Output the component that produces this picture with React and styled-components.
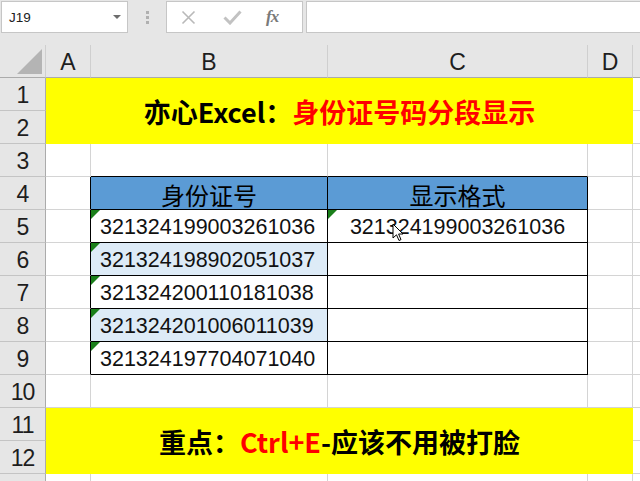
import React from 'react';
import styled, { createGlobalStyle, css } from 'styled-components';

const GlobalStyle = createGlobalStyle`
  html, body {
    margin: 0;
    padding: 0;
    background: #ffffff;
    overflow: hidden;
  }
  * { box-sizing: border-box; }
`;

const Sheet = styled.div`
  width: 640px;
  height: 481px;
  position: relative;
  overflow: hidden;
  background: #e6e6e6;
  font-family: "Liberation Sans", Arial, sans-serif;
`;

const FormulaBar = styled.div`
  height: 45px;
  display: flex;
  align-items: flex-start;
  padding: 1px 0 0 1px;
`;

const NameBox = styled.div`
  width: 127px;
  height: 32px;
  background: #fff;
  border: 1px solid #c6c6c6;
  display: flex;
  align-items: center;
  justify-content: space-between;
  padding: 0 6px 0 7px;
  font-size: 13.5px;
  color: #222;
`;

const Caret = styled.span`
  width: 0;
  height: 0;
  border-left: 4px solid transparent;
  border-right: 4px solid transparent;
  border-top: 4px solid #6d6d6d;
`;

const Grip = styled.div`
  width: 38px;
  height: 32px;
  display: flex;
  flex-direction: column;
  align-items: center;
  justify-content: center;
  gap: 2px;
`;

const GripDot = styled.span`
  width: 3px;
  height: 3px;
  background: #b0b0b0;
`;

const FxBox = styled.div`
  width: 137px;
  height: 32px;
  background: #fff;
  border: 1px solid #c6c6c6;
  display: flex;
  align-items: center;
  padding: 0 0 0 14px;
  gap: 27px;
`;

const FxLabel = styled.span`
  font-family: "Liberation Serif", "Times New Roman", serif;
  font-style: italic;
  font-weight: bold;
  font-size: 17px;
  color: #7a7a7a;
  letter-spacing: -1px;
  margin-left: -3px;
`;

const FormulaInput = styled.div`
  flex: 1;
  height: 32px;
  margin-left: 3px;
  background: #fff;
  border: 1px solid #c6c6c6;
  border-right: none;
`;

const Grid = styled.div`
  display: grid;
  grid-template-columns: 46px 45px 237px 260px 45px 1fr;
  grid-template-rows: repeat(14, 33px);
  background: #fff;
`;

const HeadCell = styled.div`
  background: #e6e6e6;
  border-right: 1px solid ${p => (p.$side ? '#ababab' : '#cfcfcf')};
  border-bottom: 1px solid ${p => (p.$side ? '#c4c4c4' : '#ababab')};
  display: flex;
  align-items: center;
  justify-content: center;
  padding-top: 2px;
  font-size: 23px;
  color: #1e1e1e;
  letter-spacing: ${p => (p.$side ? '-1px' : '0')};
  position: relative;
`;

const CornerCell = styled(HeadCell)`
  border-right: 1px solid #cfcfcf;
  justify-content: flex-end;
  align-items: flex-end;
  padding: 0 3px 3px 0;
`;

const CornerMark = styled.span`
  width: 0;
  height: 0;
  border-left: 25px solid transparent;
  border-bottom: 25px solid #b4b4b4;
`;

const Cell = styled.div`
  background: ${p => p.$bg || '#fff'};
  border-right: 1px solid ${p => p.$rc || '#d4d4d4'};
  border-bottom: 1px solid ${p => p.$bc || '#d4d4d4'};
  display: flex;
  align-items: center;
  justify-content: ${p => (p.$center ? 'center' : 'flex-start')};
  padding: 3px 0 0 9px;
  font-size: 21.5px;
  color: #111;
  position: relative;
  ${p => p.$center && css`padding: 3px 0 0 0;`}
  ${p =>
    p.$flag &&
    css`
      &::before {
        content: '';
        position: absolute;
        left: 0;
        top: 0;
        border-top: 9px solid #1a7f1a;
        border-right: 9px solid transparent;
      }
    `}
`;

const HeaderText = styled.span`
  font-family: "Noto Sans CJK SC", "Noto Sans", sans-serif;
  font-size: 24px;
  color: #000;
  margin-top: -1px;
`;

const Banner = styled.div`
  grid-column: span 4;
  grid-row: span 2;
  background: #ffff00;
  border-bottom: 1px solid #ffff00;
  display: flex;
  align-items: center;
  justify-content: center;
  font-family: "Noto Sans CJK SC", "Noto Sans", sans-serif;
  font-weight: bold;
  font-size: 27px;
  color: #000;
  padding-top: 1px;
`;

const Red = styled.span`
  color: #ff0000;
`;

const Pointer = styled.svg`
  position: absolute;
  left: 392px;
  top: 223px;
`;

const CloseIcon = () => (
  <svg width="15" height="15" viewBox="0 0 15 15">
    <path d="M1.5 1.5 L13.5 13.5 M13.5 1.5 L1.5 13.5" stroke="#b9b9b9" strokeWidth="1.6" fill="none" />
  </svg>
);

const CheckIcon = () => (
  <svg width="19" height="15" viewBox="0 0 19 15">
    <path d="M1.5 7.5 L7 13 L17.5 1.5" stroke="#c2c2c2" strokeWidth="3" fill="none" />
  </svg>
);

const ids = [
  '321324199003261036',
  '321324198902051037',
  '321324200110181038',
  '321324201006011039',
  '321324197704071040',
];

const columns = ['A', 'B', 'C', 'D', ''];
const black = '#000';

function plainRow(n, label = n) {
  return [
    <HeadCell key={`h${n}`} $side>{label}</HeadCell>,
    ...columns.map((c, i) => <Cell key={`${n}-${i}`} />),
  ];
}

function App() {
  const rows = [];

  // column headers
  rows.push(
    <CornerCell key="corner">
      <CornerMark />
    </CornerCell>,
  );
  columns.forEach(c => rows.push(<HeadCell key={`col${c}`}>{c}</HeadCell>));

  // rows 1-2 banner
  rows.push(<HeadCell key="h1" $side>1</HeadCell>);
  rows.push(
    <Banner key="banner1">
      亦心Excel：<Red>身份证号码分段显示</Red>
    </Banner>,
  );
  rows.push(<Cell key="e1" />);
  rows.push(<HeadCell key="h2" $side>2</HeadCell>);
  rows.push(<Cell key="e2" />);

  // row 3 (table top edge)
  rows.push(<HeadCell key="h3" $side>3</HeadCell>);
  rows.push(<Cell key="3a" />);
  rows.push(<Cell key="3b" $bc={black} />);
  rows.push(<Cell key="3c" $bc={black} />);
  rows.push(<Cell key="3d" />);
  rows.push(<Cell key="3e" />);

  // row 4 table header
  rows.push(<HeadCell key="h4" $side>4</HeadCell>);
  rows.push(<Cell key="4a" $rc={black} />);
  rows.push(
    <Cell key="4b" $bg="#5b9bd5" $rc={black} $bc={black} $center>
      <HeaderText>身份证号</HeaderText>
    </Cell>,
  );
  rows.push(
    <Cell key="4c" $bg="#5b9bd5" $rc={black} $bc={black} $center>
      <HeaderText>显示格式</HeaderText>
    </Cell>,
  );
  rows.push(<Cell key="4d" />);
  rows.push(<Cell key="4e" />);

  // rows 5-9 data
  ids.forEach((id, i) => {
    const n = i + 5;
    rows.push(<HeadCell key={`h${n}`} $side>{n}</HeadCell>);
    rows.push(<Cell key={`${n}a`} $rc={black} />);
    rows.push(
      <Cell key={`${n}b`} $flag $bg={i % 2 === 1 ? '#ddebf7' : '#fff'} $rc={black} $bc={black}>
        {id}
      </Cell>,
    );
    rows.push(
      <Cell key={`${n}c`} $flag={i === 0} $rc={black} $bc={black} $center>
        {i === 0 ? id : ''}
      </Cell>,
    );
    rows.push(<Cell key={`${n}d`} />);
    rows.push(<Cell key={`${n}e`} />);
  });

  rows.push(...plainRow(10));

  // rows 11-12 banner
  rows.push(<HeadCell key="h11" $side>11</HeadCell>);
  rows.push(
    <Banner key="banner2">
      重点：<Red>Ctrl+E</Red>-应该不用被打脸
    </Banner>,
  );
  rows.push(<Cell key="e11" />);
  rows.push(<HeadCell key="h12" $side>12</HeadCell>);
  rows.push(<Cell key="e12" />);

  // row 13 only peeks in at the bottom edge
  rows.push(...plainRow(13, ''));

  return (
    <Sheet>
      <GlobalStyle />
      <FormulaBar>
        <NameBox>
          J19
          <Caret />
        </NameBox>
        <Grip>
          <GripDot />
          <GripDot />
          <GripDot />
        </Grip>
        <FxBox>
          <CloseIcon />
          <CheckIcon />
          <FxLabel>fx</FxLabel>
        </FxBox>
        <FormulaInput />
      </FormulaBar>
      <Grid>{rows}</Grid>
      <Pointer width="12" height="19" viewBox="0 0 12 19">
        <path
          d="M1 1 L1 15 L4.5 11.8 L7 17.5 L9 16.6 L6.6 11 L11 11 Z"
          fill="#fff"
          stroke="#000"
          strokeWidth="1"
          strokeLinejoin="round"
        />
      </Pointer>
    </Sheet>
  );
}

export default App;
